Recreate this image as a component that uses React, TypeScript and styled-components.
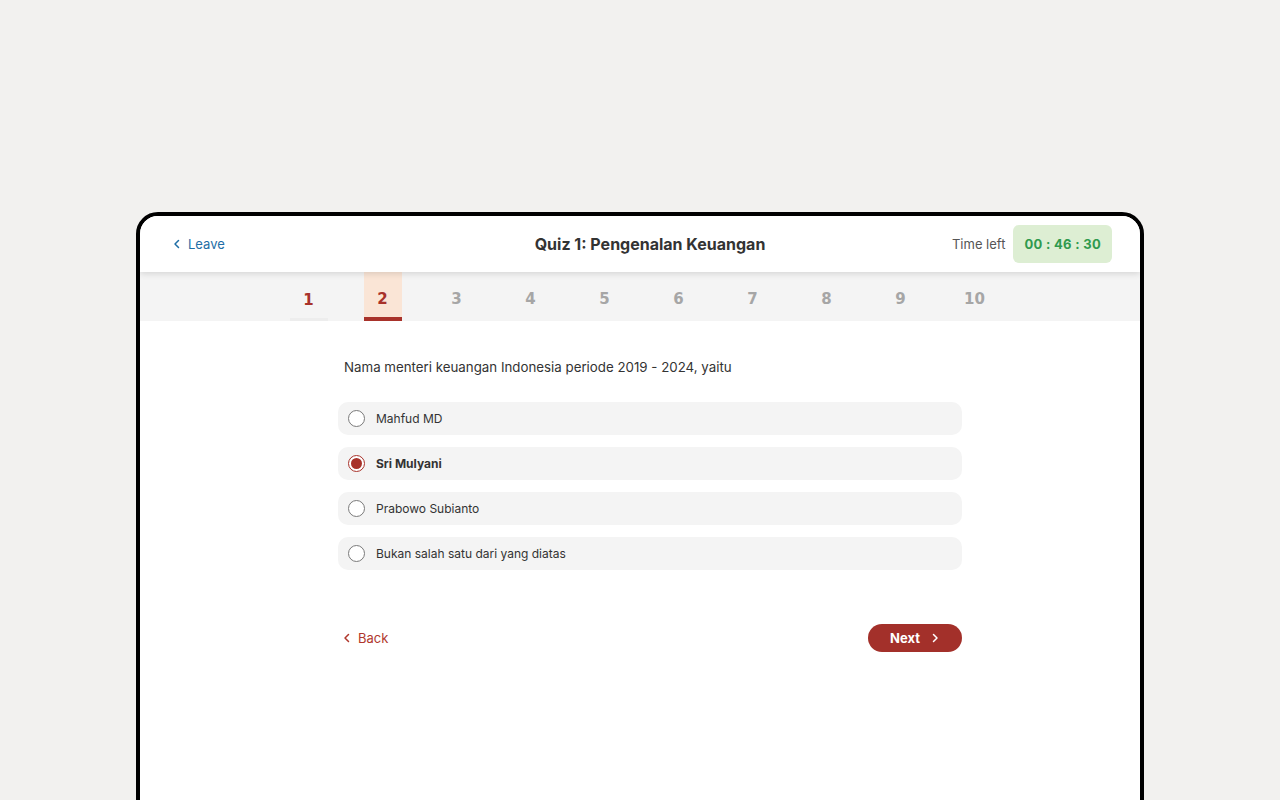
import * as React from 'react';
import styled, { createGlobalStyle } from 'styled-components';

const GlobalStyle = createGlobalStyle`
  html, body {
    margin: 0;
    padding: 0;
    background: #f2f1ef;
    overflow: hidden;
    font-family: Inter, "Noto Sans", sans-serif;
  }
`;

const Page = styled.div`
  width: 1280px;
  height: 800px;
  padding-top: 212px;
  box-sizing: border-box;
  display: flex;
  justify-content: center;
`;

const Device = styled.div`
  width: 1008px;
  height: 640px;
  box-sizing: border-box;
  border: 4px solid #000;
  border-radius: 22px;
  background: #fff;
  overflow: hidden;
  display: flex;
  flex-direction: column;
`;

const Header = styled.header`
  height: 56px;
  flex-shrink: 0;
  display: grid;
  grid-template-columns: 1fr auto 1fr;
  align-items: center;
  padding: 0 28px 0 32px;
  background: #fff;
  box-shadow: 0 2px 6px rgba(0, 0, 0, 0.12);
  position: relative;
  z-index: 1;
`;

const LinkButton = styled.button<{ $color: string }>`
  display: inline-flex;
  align-items: center;
  gap: 6px;
  border: 0;
  background: none;
  padding: 0;
  font-family: inherit;
  font-size: 13px;
  color: ${(p) => p.$color};
  cursor: pointer;
  justify-self: start;
`;

const Title = styled.h1`
  margin: 0;
  padding-left: 16px;
  font-size: 16px;
  font-weight: 700;
  color: #333;
`;

const TimeBox = styled.div`
  justify-self: end;
  display: flex;
  align-items: center;
  gap: 8px;
  font-size: 13px;
  color: #555;
`;

const Timer = styled.div`
  height: 38px;
  padding: 0 11px;
  display: flex;
  align-items: center;
  border-radius: 6px;
  background: #ddeed3;
  color: #2f9a4e;
  font-weight: 700;
  font-size: 13px;
  letter-spacing: 0.3px;
`;

const TabBar = styled.nav`
  height: 49px;
  flex-shrink: 0;
  display: flex;
  justify-content: center;
  gap: 36px;
  padding-left: 3px;
  background: #f4f4f4;
`;

const Tab = styled.div<{ $active?: boolean; $done?: boolean }>`
  width: 38px;
  display: flex;
  align-items: center;
  justify-content: center;
  box-sizing: border-box;
  padding-top: 9px;
  font-family: "DejaVu Sans", sans-serif;
  font-size: 15px;
  font-weight: 700;
  color: ${(p) => (p.$active || p.$done ? '#a8322a' : '#a6a6a6')};
  background: ${(p) => (p.$active ? '#fae5d6' : 'transparent')};
  border-bottom: ${(p) =>
    p.$active ? '4px solid #a8322a' : p.$done ? '3px solid #ededed' : '4px solid transparent'};
`;

const Main = styled.main`
  padding: 37px 0 0 20px;
  display: flex;
  justify-content: center;
`;

const Column = styled.div`
  width: 624px;
`;

const Question = styled.p`
  margin: 0 0 26px 6px;
  font-size: 13.3px;
  line-height: 18px;
  color: #333;
`;

const Options = styled.div`
  display: flex;
  flex-direction: column;
  gap: 12px;
`;

const Option = styled.label<{ $selected?: boolean }>`
  height: 33px;
  display: flex;
  align-items: center;
  gap: 11px;
  padding: 0 10px;
  border-radius: 10px;
  background: #f4f4f4;
  font-size: 12px;
  color: #333;
  font-weight: ${(p) => (p.$selected ? 700 : 400)};
  cursor: pointer;
`;

const Radio = styled.span<{ $checked?: boolean }>`
  width: 17px;
  height: 17px;
  box-sizing: border-box;
  border-radius: 50%;
  border: 1px solid ${(p) => (p.$checked ? '#a8322a' : '#7a7a7a')};
  background: #fff;
  display: flex;
  align-items: center;
  justify-content: center;
  &::after {
    content: '';
    width: 11px;
    height: 11px;
    border-radius: 50%;
    background: ${(p) => (p.$checked ? '#a8322a' : 'transparent')};
  }
`;

const Footer = styled.div`
  margin-top: 54px;
  display: flex;
  align-items: center;
  justify-content: space-between;
  padding-left: 4px;
`;

const NextButton = styled.button`
  height: 28px;
  width: 94px;
  border: 0;
  border-radius: 14px;
  background: #a3302a;
  color: #fff;
  font-family: inherit;
  font-size: 13px;
  font-weight: 700;
  display: flex;
  align-items: center;
  justify-content: center;
  gap: 10px;
  cursor: pointer;
`;

const Chevron = ({ dir, size = 10 }: { dir: 'left' | 'right'; size?: number }) => (
  <svg width={size} height={size} viewBox="0 0 10 10" fill="none">
    <path
      d={dir === 'left' ? 'M6.5 1.5 3 5l3.5 3.5' : 'M3.5 1.5 7 5 3.5 8.5'}
      stroke="currentColor"
      strokeWidth="1.5"
      strokeLinecap="round"
      strokeLinejoin="round"
    />
  </svg>
);

const options = ['Mahfud MD', 'Sri Mulyani', 'Prabowo Subianto', 'Bukan salah satu dari yang diatas'];

export default function App() {
  const [selected, setSelected] = React.useState(1);
  const current = 2;

  return (
    <>
      <GlobalStyle />
      <Page>
        <Device>
          <Header>
            <LinkButton $color="#1f6ea6">
              <Chevron dir="left" />
              Leave
            </LinkButton>
            <Title>Quiz 1: Pengenalan Keuangan</Title>
            <TimeBox>
              Time left
              <Timer>00 : 46 : 30</Timer>
            </TimeBox>
          </Header>
          <TabBar>
            {Array.from({ length: 10 }, (_, i) => i + 1).map((n) => (
              <Tab key={n} $active={n === current} $done={n < current}>
                {n}
              </Tab>
            ))}
          </TabBar>
          <Main>
            <Column>
              <Question>Nama menteri keuangan Indonesia periode 2019 - 2024, yaitu</Question>
              <Options>
                {options.map((o, i) => (
                  <Option key={o} $selected={i === selected} onClick={() => setSelected(i)}>
                    <Radio $checked={i === selected} />
                    {o}
                  </Option>
                ))}
              </Options>
              <Footer>
                <LinkButton $color="#b0372c">
                  <Chevron dir="left" />
                  Back
                </LinkButton>
                <NextButton>
                  Next
                  <Chevron dir="right" />
                </NextButton>
              </Footer>
            </Column>
          </Main>
        </Device>
      </Page>
    </>
  );
}
